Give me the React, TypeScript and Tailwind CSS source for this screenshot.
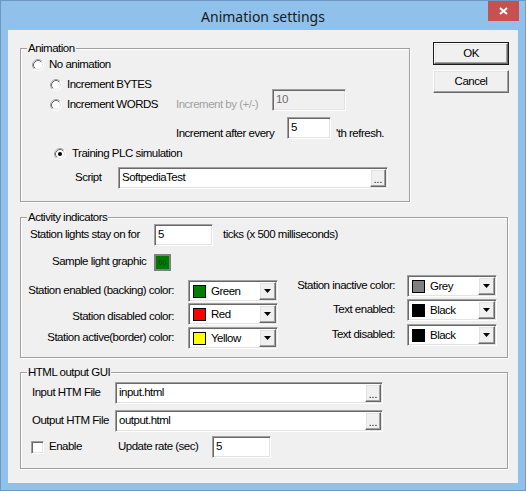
import React from 'react';

const sunken =
  'border border-t-[#a0a0a0] border-l-[#a0a0a0] border-b-white border-r-white shadow-[inset_1px_1px_0_#696969,inset_-1px_-1px_0_#e3e3e3]';
const raised =
  'border border-t-white border-l-white border-b-[#696969] border-r-[#696969] shadow-[inset_-1px_-1px_0_#a0a0a0,inset_1px_1px_0_#e3e3e3] bg-[#f0f0f0]';

function Radio({ checked = false }: { checked?: boolean }) {
  return (
    <svg width="12" height="12" viewBox="0 0 12 12" className="shrink-0">
      <circle cx="6" cy="6" r="5.5" fill="#fff" stroke="#fff" />
      <path d="M2.11 9.89 A5.5 5.5 0 0 1 9.89 2.11" fill="none" stroke="#a0a0a0" />
      <circle cx="6" cy="6" r="4.5" fill="#fff" stroke="#e3e3e3" />
      <path d="M2.82 9.18 A4.5 4.5 0 0 1 9.18 2.82" fill="none" stroke="#696969" />
      {checked && <circle cx="6" cy="6" r="2" fill="#000" />}
    </svg>
  );
}

function Group({ label, className, children }: { label: string; className: string; children: React.ReactNode }) {
  return (
    <div className={`relative border border-[#a0a0a0] shadow-[1px_1px_0_#fff,inset_1px_1px_0_#fff] ${className}`}>
      <span className="absolute left-[6px] -top-[8px] bg-[#f0f0f0] px-[1px] leading-[14px]">{label}</span>
      {children}
    </div>
  );
}

function Field({ value, className, browse = false, disabled = false }: { value: string; className: string; browse?: boolean; disabled?: boolean }) {
  return (
    <div className={`${sunken} ${disabled ? 'bg-[#f0f0f0] text-[#6d6d6d]' : 'bg-white'} flex h-[22px] p-[1px] ${className}`}>
      <span className="flex-1 pl-[2px] leading-[17px]">{value}</span>
      {browse && (
        <div className={`${raised} w-[16px] h-full flex items-end justify-center text-[10px] leading-[12px] tracking-normal`}>...</div>
      )}
    </div>
  );
}

function Combo({ color, name, className = '' }: { color: string; name: string; className?: string }) {
  return (
    <div className={`${sunken} bg-white flex items-center h-[22px] w-[90px] p-[1px] ${className}`}>
      <span className="w-[13px] h-[13px] ml-[3px] border border-black shrink-0" style={{ background: color }} />
      <span className="flex-1 ml-[5px] leading-[16px]">{name}</span>
      <div className={`${raised} w-[17px] h-full flex items-center justify-center`}>
        <svg width="7" height="4" viewBox="0 0 7 4">
          <path d="M0 0 H7 L3.5 4 Z" fill="#000" />
        </svg>
      </div>
    </div>
  );
}

export default function App() {
  return (
    <div className="w-[526px] h-[491px] bg-[#8fc1ea] border border-[#6f97c2] flex flex-col font-['Liberation_Sans',Arial,sans-serif] text-[11.5px] tracking-[-0.5px] text-black">
      {/* title bar */}
      <div className="h-[29px] flex items-start shrink-0">
        <div className="w-[37px]" />
        <div className="flex-1 text-center pt-[5px] font-['Noto_Sans',sans-serif] text-[14px] tracking-normal text-[#1a1a1a]">
          Animation settings
        </div>
        <div className="w-[31px] h-[20px] bg-[#c75050] flex items-center justify-center mr-[6px]">
          <svg width="9" height="8" viewBox="0 0 9 8">
            <path d="M1 1 L8 7 M8 1 L1 7" stroke="#fff" strokeWidth="2" />
          </svg>
        </div>
      </div>

      {/* client area */}
      <div className="ml-[7px] w-[510px] h-[453px] bg-[#f0f0f0] flex flex-col">
        <div className="flex pt-[12px] pl-[12px]">
          <Group label="Animation" className="mt-[6px] w-[390px] h-[154px] flex flex-col">
            <div className="flex items-center h-[20px] mt-[6px] pl-[11px]">
              <Radio />
              <span className="ml-[5px]">No animation</span>
            </div>
            <div className="flex items-center h-[20px] pl-[29px]">
              <Radio />
              <span className="ml-[5px]">Increment BYTES</span>
            </div>
            <div className="flex items-start h-[20px] pl-[29px]">
              <div className="flex items-center h-[20px]">
                <Radio />
                <span className="ml-[5px] w-[109px]">Increment WORDS</span>
                <span className="w-[96px] text-[#a0a0a0]">Increment by (+/-)</span>
              </div>
              <Field value="10" disabled className="w-[74px] -mt-[6px]" />
            </div>
            <div className="flex items-start h-[28px] pl-[155px]">
              <span className="w-[111px] mt-[8px] leading-[20px]">Increment after every</span>
              <Field value="5" className="w-[44px] mt-[2px]" />
              <span className="ml-[5px] mt-[8px] leading-[20px]">'th refresh.</span>
            </div>
            <div className="flex items-center h-[20px] mt-[1px] pl-[33px]">
              <Radio checked />
              <span className="ml-[6px]">Training PLC simulation</span>
            </div>
            <div className="flex items-center h-[22px] mt-[3px] pl-[54px]">
              <span className="w-[43px]">Script</span>
              <Field value="SoftpediaTest" browse className="w-[270px]" />
            </div>
          </Group>

          <div className="ml-[23px] flex flex-col">
            <button className="w-[76px] h-[23px] border border-[#1a1a1a] bg-[#f0f0f0] p-0 flex">
              <span className={`${raised} flex-1 flex items-center justify-center leading-none`}>OK</span>
            </button>
            <button className={`${raised} w-[76px] h-[23px] mt-[5px] flex items-center justify-center leading-none`}>
              Cancel
            </button>
          </div>
        </div>

        <Group label="Activity indicators" className="ml-[12px] mt-[15px] w-[488px] h-[141px] flex flex-col">
          <div className="flex items-center h-[22px] mt-[6px] pl-[9px]">
            <span className="w-[124px]">Station lights stay on for</span>
            <Field value="5" className="w-[59px]" />
            <span className="ml-[10px]">ticks (x 500 milliseconds)</span>
          </div>
          <div className="flex items-center h-[20px] mt-[6px] pl-[31px]">
            <span className="w-[102px]">Sample light graphic</span>
            <div className="w-[17px] h-[17px] border-2 border-[#808080] bg-[#007a00] flex items-center justify-center text-[7px] leading-none tracking-normal text-[#0b3b0b]">
              00
            </div>
          </div>
          <div className="flex items-start">
            <div className="flex flex-col mt-[8px]">
              <div className="flex items-center h-[22px]">
                <span className="w-[153px] text-right">Station enabled (backing) color:</span>
                <Combo color="#007f00" name="Green" className="ml-[14px]" />
              </div>
              <div className="flex items-center h-[22px] mt-[1px]">
                <span className="w-[153px] text-right mt-[6px]">Station disabled color:</span>
                <Combo color="#ff0000" name="Red" className="ml-[14px]" />
              </div>
              <div className="flex items-center h-[22px] mt-[2px]">
                <span className="w-[153px] text-right">Station active(border) color:</span>
                <Combo color="#ffff00" name="Yellow" className="ml-[14px]" />
              </div>
            </div>
            <div className="flex flex-col mt-[3px]">
              <div className="flex items-center h-[22px]">
                <span className="w-[117px] text-right">Station inactive color:</span>
                <Combo color="#808080" name="Grey" className="ml-[12px]" />
              </div>
              <div className="flex items-center h-[22px] mt-[2px]">
                <span className="w-[117px] text-right">Text enabled:</span>
                <Combo color="#000000" name="Black" className="ml-[12px]" />
              </div>
              <div className="flex items-center h-[22px] mt-[3px]">
                <span className="w-[117px] text-right">Text disabled:</span>
                <Combo color="#000000" name="Black" className="ml-[12px]" />
              </div>
            </div>
          </div>
        </Group>

        <Group label="HTML output GUI" className="ml-[12px] mt-[14px] w-[488px] h-[97px] flex flex-col">
          <div className="flex items-center h-[22px] mt-[9px] pl-[11px]">
            <span className="w-[83px]">Input HTM File</span>
            <Field value="input.html" browse className="w-[268px]" />
          </div>
          <div className="flex items-center h-[22px] mt-[6px] pl-[11px]">
            <span className="w-[83px]">Output HTM File</span>
            <Field value="output.html" browse className="w-[268px]" />
          </div>
          <div className="flex items-center h-[22px] mt-[4px] pl-[10px]">
            <span className={`${sunken} bg-white w-[13px] h-[13px] shrink-0`} />
            <span className="ml-[5px] w-[69px]">Enable</span>
            <span className="w-[94px]">Update rate (sec)</span>
            <Field value="5" className="w-[59px]" />
          </div>
        </Group>
      </div>
    </div>
  );
}
